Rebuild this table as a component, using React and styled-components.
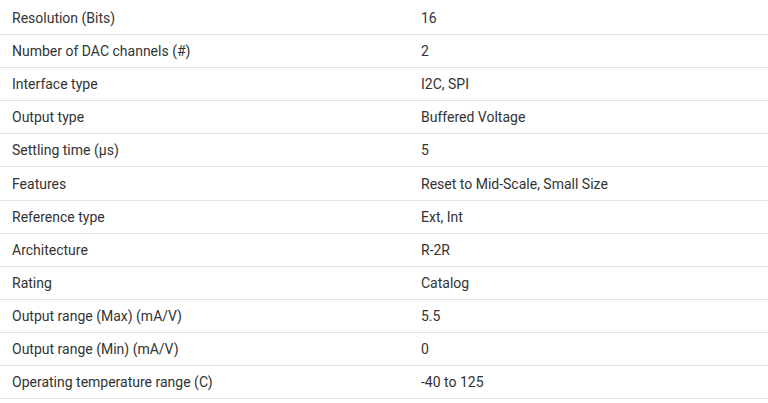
import React from 'react'
import styled, { createGlobalStyle } from 'styled-components'

const GlobalStyle = createGlobalStyle`
  html, body {
    margin: 0;
    padding: 0;
    background: #fff;
  }
`

const specs = [
  ['Resolution (Bits)', '16'],
  ['Number of DAC channels (#)', '2'],
  ['Interface type', 'I2C, SPI'],
  ['Output type', 'Buffered Voltage'],
  ['Settling time (µs)', '5'],
  ['Features', 'Reset to Mid-Scale, Small Size'],
  ['Reference type', 'Ext, Int'],
  ['Architecture', 'R-2R'],
  ['Rating', 'Catalog'],
  ['Output range (Max) (mA/V)', '5.5'],
  ['Output range (Min) (mA/V)', '0'],
  ['Operating temperature range (C)', '-40 to 125'],
]

const SpecTable = styled.div`
  padding-top: 2px;
  font-family: Roboto, 'Liberation Sans', sans-serif;
  font-size: 14px;
  color: #333;
`

const Row = styled.div`
  display: grid;
  grid-template-columns: 409px 1fr;
  height: 32.1px;
  align-items: center;
  border-bottom: 1px solid #e2e2e2;
`

const Cell = styled.div`
  padding: 0 12px;
  line-height: 20px;
`

class App extends React.Component {
  render() {
    return (
      <SpecTable>
        <GlobalStyle />
        {specs.map(([label, value]) => (
          <Row key={label}>
            <Cell>{label}</Cell>
            <Cell>{value}</Cell>
          </Row>
        ))}
      </SpecTable>
    )
  }
}

export default App
